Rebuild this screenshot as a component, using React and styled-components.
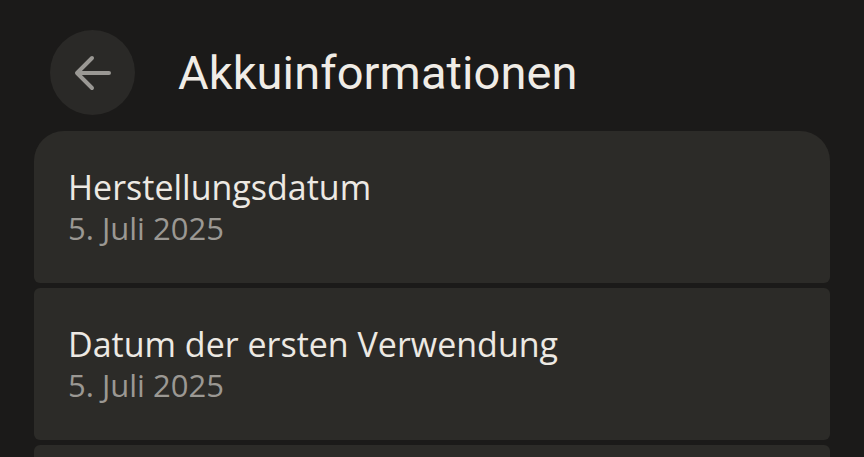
import React from 'react';
import styled, { createGlobalStyle } from 'styled-components';

const GlobalStyle = createGlobalStyle`
    body {
        margin: 0;
        background: #1b1a19;
        font-family: "Open Sans", Roboto, sans-serif;
        overflow: hidden;
    }
`

const Page = styled.div`
    width: 864px;
    height: 457px;
    background: #1b1a19;
    overflow: hidden;
`

const Header = styled.div`
    display: flex;
    align-items: center;
    gap: 43px;
    padding: 30px 0 0 50px;
    height: 85px;
`

const BackButton = styled.button`
    width: 85px;
    height: 85px;
    border-radius: 50%;
    border: none;
    background: #2a2927;
    display: flex;
    align-items: center;
    justify-content: center;
    padding: 0;
    cursor: pointer;
`

const Title = styled.h1`
    margin: 0;
    font-family: Roboto, sans-serif;
    font-size: 47px;
    font-weight: 400;
    color: #f0ece6;
    letter-spacing: 0.1px;
`

const List = styled.div`
    display: flex;
    flex-direction: column;
    gap: 5px;
    margin: 16px 34px 0;
`

const Card = styled.div`
    background: #2c2b28;
    height: 152px;
    border-radius: ${p => (p.$first ? '30px 30px 6px 6px' : '6px')};
    padding: 0 34px;
    display: flex;
    flex-direction: column;
    justify-content: center;
    box-sizing: border-box;
`

const ItemTitle = styled.div`
    font-size: 34px;
    font-weight: 500;
    color: #ede9e3;
    line-height: 42px;
`

const ItemValue = styled.div`
    font-size: 31px;
    color: #9b9893;
    line-height: 40px;
`

const items = [
    { title: 'Herstellungsdatum', value: '5. Juli 2025' },
    { title: 'Datum der ersten Verwendung', value: '5. Juli 2025' },
    {},
]

const App = () => {
    return (
        <Page>
            <GlobalStyle />
            <Header>
                <BackButton aria-label="Zurück">
                    <svg width="38" height="36" viewBox="0 0 38 36">
                        <path
                            d="M35 18H4 M18 3L3 18l15 15"
                            fill="none"
                            stroke="#9a9894"
                            strokeWidth="4"
                            strokeLinecap="round"
                            strokeLinejoin="round"
                        />
                    </svg>
                </BackButton>
                <Title>Akkuinformationen</Title>
            </Header>
            <List>
                {items.map((it, i) => (
                    <Card key={i} $first={i === 0}>
                        {it.title && <ItemTitle>{it.title}</ItemTitle>}
                        {it.value && <ItemValue>{it.value}</ItemValue>}
                    </Card>
                ))}
            </List>
        </Page>
    )
}

export default App
